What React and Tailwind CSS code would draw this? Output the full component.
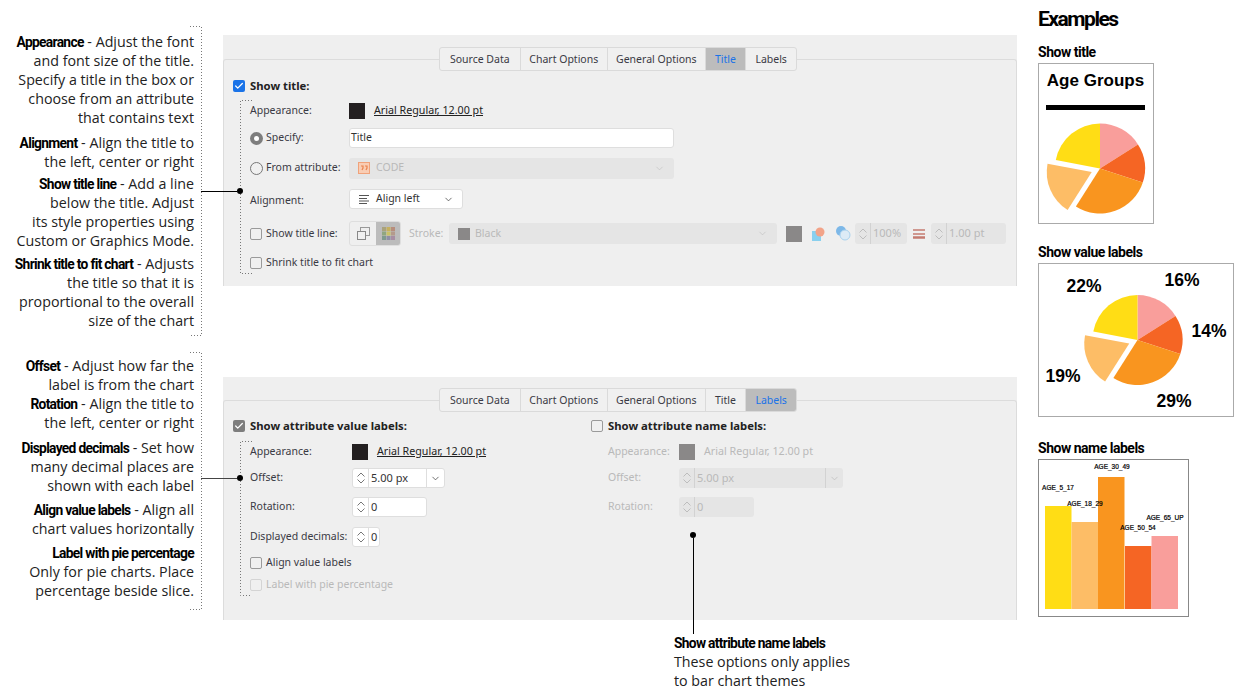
import { ChevronDown, Check } from 'lucide-react';

const UI = "[font-family:'Noto_Sans',sans-serif] text-[10.5px] text-[#3a3a44]";
const NOTE = "[font-family:'Open_Sans',sans-serif] text-[14.25px] leading-[19px] text-[#222] whitespace-nowrap";
const HEAD = "[font-family:'Roboto',sans-serif] font-bold text-black";
const BOLD = `${HEAD} text-[13.8px] leading-none tracking-[-0.05em]`;
const H3 = `${HEAD} h-[16px] text-[14px] leading-[16px] tracking-[-0.035em]`;
const LABEL_B = 'font-bold text-[11.3px] text-[#222]';
const LINK = 'ml-[9px] -mt-[2px] text-[10.7px]';
const TABS = ['Source Data', 'Chart Options', 'General Options', 'Title', 'Labels'];
const TAB_W = ['w-[80px]', 'w-[88px]', 'w-[98px]', 'w-[41px]', 'w-[51px]'];
const SLICES = [
  { pct: 16, color: '#f99e9b' },
  { pct: 14, color: '#f56524' },
  { pct: 29, color: '#f9951f' },
  { pct: 19, color: '#fdbd66', explode: true },
  { pct: 22, color: '#ffdd15' },
];
const BARS = [
  { x: 1045, top: 506, color: '#ffdd15', name: 'AGE_5_17', lx: 1058, ly: 490 },
  { x: 1071.5, top: 522, color: '#fdbd66', name: 'AGE_18_29', lx: 1085, ly: 506 },
  { x: 1098, top: 477, color: '#f9951f', name: 'AGE_30_49', lx: 1112, ly: 469 },
  { x: 1125, top: 546, color: '#f56524', name: 'AGE_50_54', lx: 1138, ly: 530 },
  { x: 1151.5, top: 536, color: '#f99e9b', name: 'AGE_65_UP', lx: 1165, ly: 520 },
];

function Pie({ cx, cy, r }) {
  let start = 0;
  return SLICES.map((s) => {
    const a0 = (start / 100) * Math.PI * 2;
    start += s.pct;
    const a1 = (start / 100) * Math.PI * 2;
    const mid = (a0 + a1) / 2;
    const ox = s.explode ? Math.sin(mid) * 9 : 0;
    const oy = s.explode ? -Math.cos(mid) * 9 : 0;
    const x = cx + ox;
    const y = cy + oy;
    const d = `M${x} ${y}L${x + Math.sin(a0) * r} ${y - Math.cos(a0) * r}A${r} ${r} 0 0 1 ${x + Math.sin(a1) * r} ${y - Math.cos(a1) * r}Z`;
    return <path key={s.pct} d={d} fill={s.color} />;
  });
}

function Tabs({ active }) {
  return (
    <div className="relative z-10 ml-[216px] flex h-[24px] w-[358px] overflow-hidden rounded-[3px] border border-[#dadada] bg-[#f0f0f0]">
      {TABS.map((t, i) => (
        <div
          key={t}
          className={`flex items-center justify-center pt-[1px] ${TAB_W[i]} ${i > 0 ? 'border-l border-[#dadada]' : ''} ${t === active ? 'bg-[#bcbcbc] text-[#1a73e8]' : ''}`}
        >
          {t}
        </div>
      ))}
    </div>
  );
}

function CheckBox({ checked, color = 'bg-[#1a73e8]', faded }) {
  if (checked) {
    return (
      <span className={`flex h-[12px] w-[12px] shrink-0 items-center justify-center rounded-[2px] ${color}`}>
        <Check size={10} strokeWidth={3} className="text-white" />
      </span>
    );
  }
  return <span className={`h-[12px] w-[12px] shrink-0 rounded-[2px] border ${faded ? 'border-[#d4d4d4]' : 'border-[#9a9a9a]'} bg-[#f0f0f0]`} />;
}

function Radio({ on }) {
  return on ? (
    <span className="flex h-[13px] w-[13px] shrink-0 items-center justify-center rounded-full bg-[#7d7d7d]">
      <span className="h-[5px] w-[5px] rounded-full bg-white" />
    </span>
  ) : (
    <span className="h-[13px] w-[13px] shrink-0 rounded-full border border-[#777] bg-[#f0f0f0]" />
  );
}

function Swatch({ color = 'bg-[#231f20]' }) {
  return <span className={`block h-[16px] w-[16px] shrink-0 ${color}`} />;
}

function Spin({ value, w, h = 'h-[20px]', off, drop }) {
  const tone = off ? 'bg-[#e5e5e5] text-[#b9b9b9]' : 'bg-white border border-[#dedede] text-[#333]';
  const line = off ? 'border-[#d2d2d2]' : 'border-[#dedede]';
  return (
    <div className={`flex shrink-0 items-center rounded-[3px] text-[11px] ${tone} ${w} ${h}`}>
      <div className={`flex h-full w-[16px] shrink-0 items-center justify-center border-r ${line}`}>
        <svg width="8" height="12" viewBox="0 0 8 12" fill="none" stroke={off ? '#bdbdbd' : '#777'}>
          <path d="M.5 4.5L4 1l3.5 3.5M.5 7.5L4 11l3.5-3.5" />
        </svg>
      </div>
      <span className="flex-1 pl-[2px]">{value}</span>
      {drop && (
        <div className={`flex h-full w-[18px] items-center justify-center border-l ${line}`}>
          <ChevronDown size={11} strokeWidth={1.5} />
        </div>
      )}
    </div>
  );
}

function Bracket({ left, top, height, tail, side }) {
  const d = side === 'left'
    ? `M0 .5H${tail + 0.5}V${height - 0.5}H0`
    : `M${tail} .5H.5V${height - 0.5}H${tail}`;
  return (
    <svg className="pointer-events-none absolute z-20 overflow-visible" style={{ left, top }} width={tail + 1} height={height}>
      <path d={d} fill="none" stroke="#777" strokeDasharray="1 2" />
    </svg>
  );
}

function Callout({ top, color }) {
  return (
    <div className="pointer-events-none absolute left-[201px] z-20 flex w-[42px] items-center" style={{ top }}>
      <div className="h-px flex-1" style={{ background: color }} />
      <div className="h-[6px] w-[6px] rounded-full bg-black" />
    </div>
  );
}

function TitlePanel() {
  return (
    <section className={`h-[251px] bg-[#efefef] pt-[12px] ${UI}`}>
      <Tabs active="Title" />
      <div className="-mt-[12px] h-[227px] rounded-t-[3px] border-x border-t border-[#dcdcdc] pl-[9px] pt-[18px]">
        <div className={`flex h-[16px] items-center gap-[5px] ${LABEL_B}`}>
          <CheckBox checked /> Show title:
        </div>
        <div className="pl-[17px]">
          <div className="mt-[7px] flex h-[20px] items-center">
            <span className="w-[99px]">Appearance:</span>
            <Swatch />
            <span className={`${LINK} text-[#222] underline`}>Arial Regular, 12.00 pt</span>
          </div>
          <div className="mt-[7px] flex h-[20px] items-center">
            <span className="flex w-[99px] items-center gap-[3px]"><Radio on /> Specify:</span>
            <div className="flex h-[20px] w-[325px] items-center rounded-[3px] border border-[#dedede] bg-white pl-[1px] text-[#333]">Title</div>
          </div>
          <div className="mt-[9px] flex h-[22px] items-center">
            <span className="flex w-[99px] items-center gap-[3px]"><Radio /> From attribute:</span>
            <div className="flex h-[21px] w-[325px] items-center rounded-[3px] bg-[#e5e5e5] pl-[9px] pr-[9px] text-[#b9b9b9]">
              <svg width="12" height="12" viewBox="0 0 12 12" className="mr-[6px]">
                <rect x=".5" y=".5" width="11" height="11" fill="#f9cdb4" stroke="#f0a27a" />
                <path d="M3 4h2v2l-1 2M7 4h2v2l-1 2" fill="none" stroke="#e9834e" strokeWidth="1.2" />
              </svg>
              <span className="flex-1">CODE</span>
              <ChevronDown size={11} strokeWidth={1.2} />
            </div>
          </div>
          <div className="mt-[10px] flex h-[20px] items-center">
            <span className="mt-[4px] w-[99px]">Alignment:</span>
            <div className="flex h-[20px] w-[114px] items-center rounded-[3px] border border-[#dedede] bg-white pl-[9px] pr-[8px] text-[#333]">
              <svg width="11" height="9" viewBox="0 0 11 9" className="mr-[6px]">
                <path d="M0 .5h10M0 3.5h8M0 6h10M0 8.5h8" stroke="#555" strokeWidth="1" />
              </svg>
              <span className="flex-1">Align left</span>
              <ChevronDown size={11} strokeWidth={1.5} />
            </div>
          </div>
          <div className="mt-[12px] flex h-[25px] items-center">
            <span className="flex w-[99px] items-center gap-[4px]"><CheckBox /> Show title line:</span>
            <div className="flex h-[25px] w-[52px] overflow-hidden rounded-[3px] border border-[#dedede]">
              <div className="flex w-[26px] items-center justify-center">
                <svg width="13" height="13" viewBox="0 0 13 13">
                  <rect x="3.5" y=".5" width="9" height="8" fill="none" stroke="#999" />
                  <rect x=".5" y="4.5" width="8" height="8" fill="#f0f0f0" stroke="#888" />
                </svg>
              </div>
              <div className="flex flex-1 items-center justify-center bg-[#bcbcbc]">
                <svg width="13" height="13" viewBox="0 0 13 13">
                  <rect width="4" height="4" fill="#a9a27c" /><rect x="4.5" width="4" height="4" fill="#c5b05e" /><rect x="9" width="4" height="4" fill="#b78d7c" />
                  <rect y="4.5" width="4" height="4" fill="#8fa680" /><rect x="4.5" y="4.5" width="4" height="4" fill="#c9c267" /><rect x="9" y="4.5" width="4" height="4" fill="#b49a8c" />
                  <rect y="9" width="4" height="4" fill="#7f9a8e" /><rect x="4.5" y="9" width="4" height="4" fill="#8f8fa5" /><rect x="9" y="9" width="4" height="4" fill="#a88ea3" />
                </svg>
              </div>
            </div>
            <span className="ml-[8px] w-[40px] text-[#b9b9b9]">Stroke:</span>
            <div className="flex h-[21px] w-[328px] items-center rounded-[3px] bg-[#e5e5e5] pl-[9px] pr-[9px] text-[#b9b9b9]">
              <span className="mr-[5px] h-[12px] w-[12px] bg-[#8a8888]" />
              <span className="flex-1">Black</span>
              <ChevronDown size={11} strokeWidth={1.2} />
            </div>
            <span className="ml-[9px]"><Swatch color="bg-[#8a8888]" /></span>
            <svg width="13" height="14" viewBox="0 0 13 14" className="ml-[10px] shrink-0">
              <rect y="4" width="9" height="10" fill="#8ad0ee" />
              <circle cx="8" cy="5" r="4.5" fill="#f2a388" />
            </svg>
            <svg width="15" height="15" viewBox="0 0 15 15" className="ml-[11px] shrink-0">
              <circle cx="5" cy="5" r="5" fill="#7db8e8" />
              <circle cx="9" cy="9" r="5" fill="#dcebf6" stroke="#a9d2ee" />
            </svg>
            <span className="ml-[4px]"><Spin value="100%" w="w-[52px]" h="h-[21px]" off /></span>
            <svg width="12" height="10" viewBox="0 0 12 10" className="ml-[6px] shrink-0">
              <path d="M0 1h12" stroke="#c47b70" strokeWidth="1.5" /><path d="M0 5h12" stroke="#c47b70" strokeWidth="1.5" /><path d="M0 8.5h12" stroke="#c47b70" strokeWidth="2.5" />
            </svg>
            <span className="ml-[6px]"><Spin value="1.00 pt" w="w-[75px]" h="h-[21px]" off /></span>
          </div>
          <div className="mt-[8px] flex h-[18px] items-center gap-[4px]"><CheckBox /> Shrink title to fit chart</div>
        </div>
      </div>
    </section>
  );
}

function LabelsPanel() {
  return (
    <section className={`mt-[91px] h-[243px] bg-[#efefef] pt-[11px] ${UI}`}>
      <Tabs active="Labels" />
      <div className="-mt-[12px] flex h-[220px] rounded-t-[3px] border-x border-t border-[#dcdcdc] pl-[9px] pt-[17px]">
        <div className="w-[358px]">
          <div className={`flex h-[16px] items-center gap-[5px] ${LABEL_B}`}>
            <CheckBox checked color="bg-[#7d7d7d]" /> Show attribute value labels:
          </div>
          <div className="pl-[17px]">
            <div className="mt-[8px] flex h-[20px] items-center">
              <span className="w-[102px]">Appearance:</span>
              <Swatch />
              <span className={`${LINK} text-[#222] underline`}>Arial Regular, 12.00 pt</span>
            </div>
            <div className="mt-[6px] flex h-[20px] items-center">
              <span className="w-[102px]">Offset:</span>
              <Spin value="5.00 px" w="w-[93px]" drop />
            </div>
            <div className="mt-[9px] flex h-[20px] items-center">
              <span className="w-[102px]">Rotation:</span>
              <Spin value="0" w="w-[75px]" />
            </div>
            <div className="mt-[10px] flex h-[20px] items-center">
              <span className="w-[102px]">Displayed decimals:</span>
              <Spin value="0" w="w-[28px]" />
            </div>
            <div className="mt-[8px] flex h-[16px] items-center gap-[4px]"><CheckBox /> Align value labels</div>
            <div className="mt-[6px] flex h-[16px] items-center gap-[4px] text-[#b9b9b9]"><CheckBox faded /> Label with pie percentage</div>
          </div>
        </div>
        <div className="text-[#b9b9b9]">
          <div className={`flex h-[16px] items-center gap-[5px] ${LABEL_B}`}>
            <CheckBox /> Show attribute name labels:
          </div>
          <div className="pl-[17px]">
            <div className="mt-[8px] flex h-[20px] items-center">
              <span className="w-[71px]">Appearance:</span>
              <Swatch color="bg-[#8a8888]" />
              <span className={LINK}>Arial Regular, 12.00 pt</span>
            </div>
            <div className="mt-[6px] flex h-[20px] items-center">
              <span className="w-[71px]">Offset:</span>
              <Spin value="5.00 px" w="w-[164px]" off drop />
            </div>
            <div className="mt-[9px] flex h-[20px] items-center">
              <span className="w-[71px]">Rotation:</span>
              <Spin value="0" w="w-[75px]" off />
            </div>
          </div>
        </div>
      </div>
    </section>
  );
}

function Examples() {
  return (
    <aside className="ml-[21px] flex flex-col items-start pt-[6px]">
      <h2 className={`h-[26px] text-[21px] leading-[26px] tracking-[-0.07em] ${HEAD}`}>Examples</h2>
      <h3 className={`mt-[12px] ${H3}`}>Show title</h3>
      <div className="mt-[3px] h-[161px] w-[116px] border border-[#aaa] bg-white">
        <svg width="114" height="159" viewBox="1039 64 114 159" className="block">
          <text x="1095.5" y="86" textAnchor="middle" fontFamily="Liberation Sans" fontWeight="700" fontSize="17">Age Groups</text>
          <rect x="1046" y="105" width="99" height="5" fill="#000" />
          <Pie cx={1100} cy={168.5} r={45} />
        </svg>
      </div>
      <h3 className={`mt-[20px] ${H3}`}>Show value labels</h3>
      <div className="mt-[3px] h-[154px] w-[196px] border border-[#aaa] bg-white">
        <svg width="194" height="152" viewBox="1039 264 194 152" className="block">
          <Pie cx={1137.5} cy={340} r={45} />
          <g textAnchor="middle" fontFamily="Liberation Sans" fontWeight="700" fontSize="17.5">
            <text x="1182" y="286">16%</text>
            <text x="1084" y="292">22%</text>
            <text x="1209" y="337">14%</text>
            <text x="1063" y="382">19%</text>
            <text x="1174" y="407">29%</text>
          </g>
        </svg>
      </div>
      <h3 className={`mt-[23px] ${H3}`}>Show name labels</h3>
      <div className="mt-[3px] h-[158px] w-[151px] border border-[#888] bg-white">
        <svg width="149" height="156" viewBox="1039 460 149 156" className="block">
          {BARS.map((b) => (
            <rect key={b.name} x={b.x} y={b.top} width="26.5" height={609 - b.top} fill={b.color} />
          ))}
          <g textAnchor="middle" fontFamily="Liberation Sans" fontSize="6.5" stroke="#000" strokeWidth=".2">
            {BARS.map((b) => (
              <text key={b.name} x={b.lx} y={b.ly}>{b.name}</text>
            ))}
          </g>
        </svg>
      </div>
    </aside>
  );
}

export default function App() {
  return (
    <div className="relative flex h-[699px] w-[1241px] overflow-hidden bg-white">
      <div className={`w-[223px] shrink-0 pr-[29px] text-right ${NOTE}`}>
        <div className="h-[324px] pt-[32px]">
          <p><b className={BOLD}>Appearance</b> - Adjust the font<br />and font size of the title.<br />Specify a title in the box or<br />choose from an attribute<br />that contains text</p>
          <p className="mt-[6px]"><b className={BOLD}>Alignment</b> - Align the title to<br />the left, center or right</p>
          <p className="mt-[3px]"><b className={BOLD}>Show title line</b> - Add a line<br />below the title. Adjust<br />its style properties using<br />Custom or Graphics Mode.</p>
          <p className="mt-[4px]"><b className={BOLD}>Shrink title to fit chart</b> - Adjusts<br />the title so that it is<br />proportional to the overall<br />size of the chart</p>
        </div>
        <div className="pt-[32px]">
          <p><b className={BOLD}>Offset</b> - Adjust how far the<br />label is from the chart</p>
          <p><b className={BOLD}>Rotation</b> - Align the title to<br />the left, center or right</p>
          <p className="mt-[6px]"><b className={BOLD}>Displayed decimals</b> - Set how<br />many decimal places are<br />shown with each label</p>
          <p className="mt-[5px]"><b className={BOLD}>Align value labels</b> - Align all<br />chart values horizontally</p>
          <p className="mt-[5px]"><b className={BOLD}>Label with pie percentage</b><br />Only for pie charts. Place<br />percentage beside slice.</p>
        </div>
      </div>
      <main className="w-[794px] shrink-0 pt-[35px]">
        <TitlePanel />
        <LabelsPanel />
      </main>
      <Examples />

      <Bracket left={190} top={26} height={310} tail={11} side="left" />
      <Bracket left={190} top={352} height={258} tail={11} side="left" />
      <Bracket left={240} top={100} height={174} tail={12} />
      <Bracket left={240} top={441} height={155} tail={12} />
      <Callout top={188} color="#000" />
      <Callout top={475} color="#444" />

      <div className="pointer-events-none absolute left-[690px] top-[532px] z-20 flex flex-col items-center">
        <div className="h-[6px] w-[6px] rounded-full bg-black" />
        <div className="h-[96px] w-px bg-black" />
      </div>
      <div className={`absolute left-[674px] top-[633px] z-20 ${NOTE}`}>
        <b className={BOLD}>Show attribute name labels</b><br />These options only applies<br />to bar chart themes
      </div>
    </div>
  );
}
